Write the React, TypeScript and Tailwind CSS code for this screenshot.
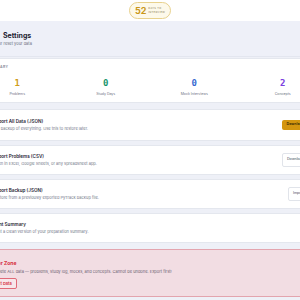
import React from 'react';

const stats = [
  { value: '1', label: 'Problems', color: 'text-[#cf9d1c]' },
  { value: '0', label: 'Study Days', color: 'text-[#16946b]' },
  { value: '0', label: 'Mock Interviews', color: 'text-[#3768d0]' },
  { value: '2', label: 'Concepts', color: 'text-[#7b3fe0]' },
];

const actions = [
  {
    title: 'Export All Data (JSON)',
    desc: 'Full backup of everything. Use this to restore later.',
    button: 'Download',
    primary: true,
    box: 'h-[32px]',
  },
  {
    title: 'Export Problems (CSV)',
    desc: 'Open in Excel, Google Sheets, or any spreadsheet app.',
    button: 'Download',
    primary: false,
    box: 'h-[30px] mt-[4px]',
  },
  {
    title: 'Import Backup (JSON)',
    desc: 'Restore from a previously exported PyTrack backup file.',
    button: 'Import',
    primary: false,
    box: 'h-[30px] mt-[4px]',
  },
  {
    title: 'Print Summary',
    desc: 'Print a clean version of your preparation summary.',
    button: '',
    primary: false,
    box: 'h-[30px] mt-[4px]',
  },
];

export default function App() {
  return (
    <div className="w-[300px] h-[300px] overflow-hidden bg-[#eef0f7] font-['Inter',sans-serif] text-[#1f2433] leading-none">
      <div className="h-[21px] bg-white flex items-center justify-center">
        <div className="flex items-center gap-[2px] h-[17px] px-[5px] rounded-full border border-[#e8d18d] bg-[#fdf9ea]">
          <span className="text-[9px] font-bold leading-none text-[#c9971a]">52</span>
          <span className="flex flex-col text-[2.6px] leading-[3.4px] tracking-[0.3px] uppercase text-[#8a7a55]">
            <span>Days to</span>
            <span>Interview</span>
          </span>
        </div>
      </div>

      <div className="w-[330px] ml-[-15px]">
        <div className="h-[36px] bg-[#eef0f8] border-b border-[#e3e6ef] px-[8px] pt-[10px] flex flex-col items-start">
          <div className="text-[7px] font-bold leading-[10px] ml-[10px]">Settings</div>
          <div className="text-[4px] leading-[6px] text-[#6b7080] ml-[-11px]">Back up or reset your data</div>
        </div>

        <div className="flex flex-col pt-[1px]">
          <div className="h-[45px] bg-white border-y border-[#e4e7ee] px-[8px] pt-[6px]">
            <div className="text-[3.5px] leading-[5px] uppercase tracking-[0.4px] font-semibold text-[#7a8090] ml-[-18px]">Data Summary</div>
            <div className="grid grid-cols-4 gap-[40px] mt-[8px] w-[314px]">
              {stats.map((s) => (
                <div key={s.label} className="flex flex-col items-center">
                  <span className={`text-[9px] font-bold leading-[10px] font-['DejaVu_Sans_Mono',monospace] ${s.color}`}>{s.value}</span>
                  <span className="text-[3.5px] leading-[5px] mt-[4px] text-[#6b7080]">{s.label}</span>
                </div>
              ))}
            </div>
          </div>

          <div className="mt-[6px]">
            {actions.map((a) => (
              <div
                key={a.title}
                className={`${a.box} bg-white border-y border-[#e4e7ee] pl-[8px] pr-[6px] flex items-center justify-between`}
              >
                <div className="flex flex-col">
                  <span className="text-[4.6px] font-semibold leading-[8px]">{a.title}</span>
                  <span className="text-[4px] leading-[6px] text-[#737888]">{a.desc}</span>
                </div>
                {a.button && (
                  <button
                    className={
                      a.primary
                        ? 'h-[10px] px-[5px] rounded-[2px] bg-[#d4960f] text-[3.6px] font-semibold text-[#3a2a05]'
                        : 'h-[14px] px-[4px] rounded-[2px] bg-white border border-[#e1e4ea] text-[3.6px] text-[#444a58]'
                    }
                  >
                    {a.button}
                  </button>
                )}
              </div>
            ))}
          </div>

          <div className="h-[48px] mt-[6px] bg-[#f2dde3] border border-[#e3a4ae] px-[8px] pt-[10px] flex flex-col items-start">
            <div className="text-[5px] font-bold leading-[7px] text-[#d62d3a] ml-[-9px]">Danger Zone</div>
            <div className="text-[4px] leading-[6px] text-[#6b6070] mt-[2px]">
              Delete ALL data — problems, study log, mocks, and concepts. Cannot be undone. Export first!
            </div>
            <button className="mt-[3px] ml-[-8px] h-[11px] px-[4px] rounded-[2px] border border-[#e06a78] bg-[#f7e6ea] text-[4px] leading-none font-semibold text-[#d62d3a]">
              Reset Data
            </button>
          </div>
        </div>
      </div>
    </div>
  );
}
